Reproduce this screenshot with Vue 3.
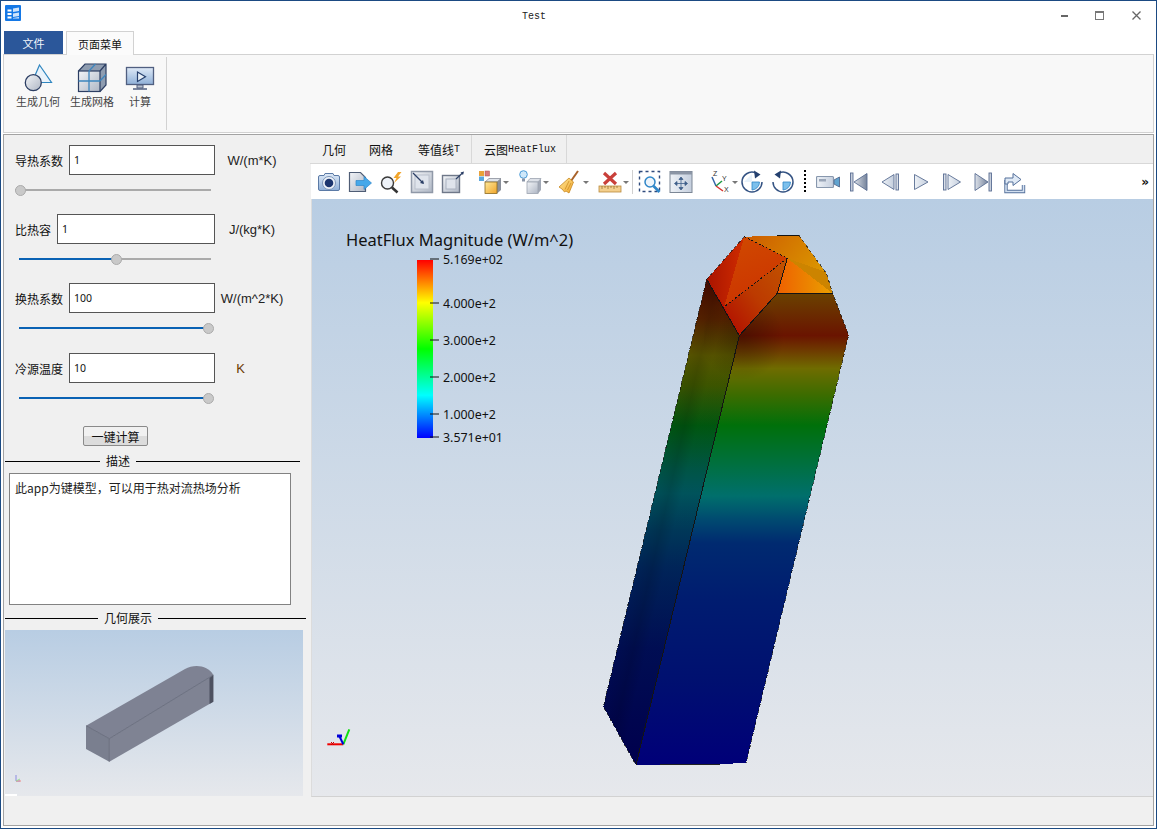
<template>
  <div class="window">
    <svg class="defs" width="0" height="0" aria-hidden="true">
      <defs>
        <linearGradient id="g-blue" x1="0" y1="0" x2="0" y2="1">
          <stop offset="0" stop-color="#dfeaf7" />
          <stop offset="1" stop-color="#8fb0d8" />
        </linearGradient>
        <linearGradient id="g-gray" x1="0" y1="0" x2="1" y2="1">
          <stop offset="0" stop-color="#f3f5f8" />
          <stop offset="1" stop-color="#aeb6c4" />
        </linearGradient>
        <linearGradient id="g-light" x1="0" y1="0" x2="1" y2="0">
          <stop offset="0" stop-color="#eef2f7" />
          <stop offset="1" stop-color="#c4cedd" />
        </linearGradient>
        <linearGradient id="g-dark" x1="0" y1="0" x2="1" y2="0">
          <stop offset="0" stop-color="#dde2ea" />
          <stop offset="1" stop-color="#75839b" />
        </linearGradient>
        <linearGradient id="g-yellow" x1="0" y1="0" x2="1" y2="1">
          <stop offset="0" stop-color="#ffe99a" />
          <stop offset="1" stop-color="#f0a52a" />
        </linearGradient>
      </defs>
    </svg>

    <header class="titlebar">
      <svg class="titlebar__logo" viewBox="0 0 16 16">
        <rect width="16" height="16" rx="1" fill="#1478e6" />
        <path d="M2.500 4.500h4v2h-4zM2.500 8h4v2h-4zM2.500 11.500h4v2h-4z" fill="#fff" />
        <path d="M8 3.500 14 2.500V6L8 7zM8 8.500 14 7.500V11L8 12zM8 13 14 12V13.500H8z" fill="#cfe4fb" />
      </svg>
      <span class="titlebar__text">Test</span>
      <div class="titlebar__controls">
        <span class="winbtn"><i class="winbtn__min"></i></span>
        <span class="winbtn"><i class="winbtn__max"></i></span>
        <span class="winbtn">
          <svg width="9" height="9" viewBox="0 0 9 9"><path d="M.5.5l8 8M8.500.5l-8 8" stroke="#666" stroke-width="1.300" /></svg>
        </span>
      </div>
    </header>

    <nav class="menu-tabs">
      <span class="menu-tab menu-tab--file">文件</span>
      <span class="menu-tab menu-tab--active">页面菜单</span>
    </nav>

    <section class="ribbon">
      <div class="ribbon__group">
        <div class="ribbon__btn">
          <svg width="32" height="32" viewBox="0 0 32 32">
            <path d="M17.500 3 29.500 20.500H10z" fill="#eaf3fb" stroke="#2f86c0" stroke-width="1.200" />
            <circle cx="11.300" cy="20.700" r="8" fill="url(#g-gray)" stroke="#2c3e63" stroke-width="1.300" />
          </svg>
          <span>生成几何</span>
        </div>
        <div class="ribbon__btn">
          <svg width="32" height="32" viewBox="0 0 32 32">
            <path d="M2.500 9 9 2h21v21l-6 6.500z" fill="#8e9cb0" />
            <rect x="2.500" y="9" width="21.500" height="20.500" fill="url(#g-gray)" stroke="#2c3e63" stroke-width="1.200" />
            <path d="M2.500 9 9 2h21v21l-6 6.500M24 9l6-7" fill="none" stroke="#2c3e63" stroke-width="1.200" />
            <path d="M13 9v20.500M2.500 19H24M13 9l6.500-7M24 19l6-6.500" fill="none" stroke="#3d85bd" stroke-width="1.300" />
          </svg>
          <span>生成网格</span>
        </div>
        <div class="ribbon__btn">
          <svg width="32" height="32" viewBox="0 0 32 32">
            <rect x="2.500" y="5.500" width="27" height="17" fill="url(#g-blue)" stroke="#505f80" stroke-width="1.300" />
            <path d="M13.500 10v9.500l8-4.800z" fill="#e8f0f8" stroke="#26406e" stroke-width="1.200" />
            <path d="M13 23h6v3h-6z" fill="#b7bfcc" stroke="#505f80" />
            <path d="M9 27h14" stroke="#505f80" stroke-width="1.500" />
          </svg>
          <span>计算</span>
        </div>
      </div>
    </section>

    <main class="main">
      <aside class="side">
        <div v-for="f in fields" :key="f.label" class="field">
          <div class="field__row">
            <div class="field__left">
              <label class="field__label">{{ f.label }}</label>
              <input class="field__input" :value="f.value" />
            </div>
            <span class="field__unit" :class="{ 'field__unit--short': f.unit === 'K' }">{{ f.unit }}</span>
          </div>
          <div class="slider" :class="{ 'slider--empty': f.pos < 5 }">
            <div class="slider__track"></div>
            <div class="slider__fill" :style="{ width: f.pos + 'px' }"></div>
            <div class="slider__handle" :style="{ left: f.pos + 'px' }"></div>
          </div>
        </div>

        <button class="calc-btn" type="button">一键计算</button>

        <div class="section-title section-title--desc">
          <i class="section-title__lead"></i><span>描述</span><i class="section-title__rest"></i>
        </div>
        <textarea class="desc" readonly :value="description"></textarea>

        <div class="section-title section-title--geo">
          <i class="section-title__lead"></i><span>几何展示</span><i class="section-title__rest"></i>
        </div>
        <div class="preview">
          <svg width="298" height="166" viewBox="5 630 298 166">
            <path d="M86 725.700 185 669C194 664 208 665 213.300 675L109.300 738.700z" fill="#7e8293" />
            <path d="M109.300 738.700 213.300 675V701.700L109.300 761.700z" fill="#7f8393" />
            <path d="M209.500 678 213.300 675V701.700L209.500 704z" fill="#4d5160" />
            <path d="M86 725.700 109.300 738.700V761.700L86 749z" fill="#7a7f8f" />
            <path d="M86 725.700 109.300 738.700 213.300 675M109.300 738.700V761.700" fill="none" stroke="#5c6070" stroke-width="0.700" />
            <path d="M16 775v6h4" fill="none" stroke="#8c8ce0" />
            <path d="M16 781h5" stroke="#e88" />
            <path d="M16 781l4-2" stroke="#9d9" />
            <rect x="5" y="794" width="12" height="2" fill="#fff" />
          </svg>
        </div>
      </aside>

      <div class="work">
        <div class="work-tabs">
          <span class="work-tab work-tab--a">几何</span>
          <span class="work-tab">网格</span>
          <span class="work-tab work-tab--c">等值线<b>T</b></span>
          <span class="work-tab work-tab--d">云图<b>HeatFlux</b></span>
        </div>

        <div class="toolbar">
          <span class="tb">
            <svg viewBox="0 0 24 24"><path d="M1.500 7Q1.500 5.500 3 5.500h4l1-2h8l1 2h4q1.500 0 1.500 1.500v12q0 1.500-1.500 1.500H3q-1.500 0-1.500-1.500z" fill="url(#g-blue)" stroke="#5b7aa6" /><circle cx="12" cy="13" r="6.500" fill="#eef3f9" stroke="#7d95b8" /><circle cx="12" cy="13" r="4.300" fill="#1c366f" /></svg>
          </span>
          <span class="tb">
            <svg viewBox="0 0 24 24"><path d="M1.500 2.500h11l5 5v14h-16z" fill="url(#g-gray)" stroke="#4f5d75" stroke-width="1.200" /><path d="M8 10.500h8V6.500l7.500 6.500-7.500 6.500v-4H8z" fill="#45a8ea" stroke="#2f86c8" stroke-width="0.700" /></svg>
          </span>
          <span class="tb">
            <svg viewBox="0 0 24 24"><circle cx="8.500" cy="13" r="6" fill="#eef2f8" stroke="#3a3a3a" stroke-width="1.400" /><path d="M13 17.500l5.500 5" stroke="#333" stroke-width="2.600" /><path d="M19 2 14.500 8h3l-2.500 5 7-6.500h-3L22.500 2z" fill="#f2a52b" /></svg>
          </span>
          <span class="tb">
            <svg viewBox="0 0 24 24"><rect x="1.500" y="1.500" width="21" height="21" fill="url(#g-gray)" stroke="#9099a8" stroke-width="1.500" /><rect x="5" y="5" width="14" height="14" fill="#dfe4ec" stroke="#b9c0cc" /><path d="M3 3 13 13" stroke="#2b3f66" stroke-width="1.300" /><path d="M14 14l-4-1 3-3z" fill="#2b3f66" /></svg>
          </span>
          <span class="tb">
            <svg viewBox="0 0 24 24"><rect x="1.500" y="5.500" width="17" height="17" fill="url(#g-gray)" stroke="#6f7889" stroke-width="1.400" /><rect x="5" y="9" width="10" height="10" fill="#dfe4ec" stroke="#aab2c0" /><path d="M15 9 22 2.500" stroke="#2b3f66" stroke-width="1.200" /><path d="M23 1.500l-1 3.500-2.500-2.500z" fill="#2b3f66" /></svg>
          </span>

          <span class="tb tb--drop tb--first-drop">
            <svg viewBox="0 0 24 24"><rect x="1" y="1" width="5" height="5" fill="#e9a23a" /><rect x="1" y="6.500" width="5" height="4.500" fill="#5ba7dd" /><rect x="7" y="1" width="4.500" height="5" fill="#d97a7a" stroke="#a55" stroke-width="0.500" /><path d="M7 12h12l4-3.500H11z" fill="#dfe3ea" stroke="#8a8f9a" stroke-width="0.800" /><path d="M19 12l4-3.500V20l-4 3.500z" fill="#8a8f9a" /><rect x="7" y="12" width="12" height="11.500" fill="url(#g-yellow)" stroke="#8c6a20" stroke-width="0.800" /></svg>
            <i class="caret"></i>
          </span>
          <span class="tb tb--drop">
            <svg viewBox="0 0 24 24"><circle cx="5.500" cy="4.500" r="3.800" fill="#cfe8fa" stroke="#4a9ad6" /><path d="M4 8.500h3v3H4z" fill="#8a94a6" /><path d="M9 12h11l3-3.500H12z" fill="#dde1e8" stroke="#9ca3b0" stroke-width="0.800" /><path d="M20 12l3-3.500V20l-3 3.500z" fill="#a2a9b6" /><rect x="9" y="12" width="11" height="11.500" fill="url(#g-gray)" stroke="#9ca3b0" stroke-width="0.800" /></svg>
            <i class="caret"></i>
          </span>
          <span class="tb tb--drop">
            <svg viewBox="0 0 24 24"><path d="M20 1 13 11" stroke="#a8622a" stroke-width="2" /><path d="M11 8 15.500 12 11 23 8 21 6.500 22 4 19 1 17z" fill="url(#g-yellow)" stroke="#c8861e" stroke-width="0.800" /><path d="M11 11 7 19.500M13 13l-3.500 7" stroke="#c8861e" stroke-width="0.700" /></svg>
            <i class="caret"></i>
          </span>
          <span class="tb tb--drop tb--ruler">
            <svg viewBox="0 0 24 24"><path d="M6 3l12 11M18 3 6 14" stroke="#c9403a" stroke-width="3.200" /><rect x="1" y="16" width="22" height="6" fill="#f3cf8d" stroke="#b98a3d" stroke-width="0.800" /><path d="M4 16v3M7 16v2M10 16v3M13 16v2M16 16v3M19 16v2" stroke="#8b642a" stroke-width="0.700" /></svg>
            <i class="caret"></i>
          </span>
          <i class="tb-sep"></i>
          <span class="tb">
            <svg viewBox="0 0 24 24"><rect x="1.500" y="1.500" width="20" height="20" fill="none" stroke="#2f4a7d" stroke-width="1.400" stroke-dasharray="3 3" /><circle cx="12" cy="12" r="5" fill="#eef5fb" stroke="#2f86c8" stroke-width="1.500" /><path d="M15.500 16l6 6" stroke="#2f86c8" stroke-width="2.600" /></svg>
          </span>
          <span class="tb">
            <svg viewBox="0 0 24 24"><rect x="1" y="1.500" width="22" height="21" fill="url(#g-light)" stroke="#7c8796" /><rect x="1" y="1.500" width="22" height="3" fill="#8b95a5" /><path d="M12 7l2 2.500h-4zM12 20l2-2.500h-4zM5.500 13.500 8 11.500v4zM18.500 13.500 16 11.500v4zM12 9.500v8M8 13.500h8" fill="#3f5f8a" stroke="#3f5f8a" stroke-width="0.800" /></svg>
          </span>
          <span class="tb tb--drop tb--axes">
            <svg viewBox="0 0 24 24">
              <path d="M8 16 4 7" stroke="#3465a8" stroke-width="1.500" /><path d="M8 16 14 11" stroke="#1e9a44" stroke-width="1.500" /><path d="M8 16l7 5" stroke="#d8332f" stroke-width="1.500" />
              <text class="axis-letter" x="5" y="6">Z</text><text class="axis-letter" x="14" y="11">Y</text><text class="axis-letter" x="16" y="22">X</text>
            </svg>
            <i class="caret"></i>
          </span>
          <span class="tb tb--rotate">
            <svg viewBox="0 0 24 24"><path d="M12 12h7.500a8 8 0 0 1-7.500 8z" fill="#7cc0ec" stroke="#2f86c8" stroke-width="0.800" /><path d="M12 4V12H4" fill="#e8f2fb" /><path d="M2 12A10 10 0 0 0 22 12" fill="none" stroke="#345383" stroke-width="1.500" /><path d="M2 12A10 10 0 0 1 16 3" fill="none" stroke="#345383" stroke-width="1.500" /><path d="M14 .5l6.500 4-5.500 4z" fill="#24406f" /></svg>
          </span>
          <span class="tb tb--rotate">
            <svg viewBox="0 0 24 24"><path d="M12 12h7.500a8 8 0 0 1-7.500 8z" fill="#7cc0ec" stroke="#2f86c8" stroke-width="0.800" /><path d="M2 12A10 10 0 0 0 22 12 10 10 0 0 0 8 3" fill="none" stroke="#345383" stroke-width="1.500" /><path d="M10 .5 3.500 4.500l5.500 4z" fill="#24406f" /></svg>
          </span>
          <i class="tb-dots"></i>
          <span class="tb">
            <svg viewBox="0 0 24 24"><rect x="0.500" y="6.500" width="17" height="11" rx="1" fill="url(#g-light)" stroke="#8797ad" stroke-width="1.200" /><rect x="3" y="9" width="7" height="2.500" fill="#9aa6b8" /><path d="M18 10l5.500-3v10L18 14z" fill="#5fa3cf" stroke="#5b7396" /></svg>
          </span>
          <span class="tb">
            <svg viewBox="0 0 24 24"><rect x="3.500" y="3" width="2.500" height="18" fill="#c6cedb" stroke="#596d92" stroke-width="0.900" /><path d="M20 3.500 7 12l13 8.500z" fill="url(#g-dark)" stroke="#596d92" stroke-width="0.900" /></svg>
          </span>
          <span class="tb">
            <svg viewBox="0 0 24 24"><path d="M16 4.500 4 12l12 7.500z" fill="url(#g-light)" stroke="#596d92" stroke-width="0.900" /><rect x="18" y="4" width="2.500" height="16" fill="#d9dfe8" stroke="#596d92" stroke-width="0.900" /></svg>
          </span>
          <span class="tb">
            <svg viewBox="0 0 24 24"><path d="M5.500 4.500 19 12 5.500 19.500z" fill="url(#g-light)" stroke="#596d92" stroke-width="0.900" /></svg>
          </span>
          <span class="tb">
            <svg viewBox="0 0 24 24"><rect x="3.500" y="4" width="2.500" height="16" fill="#d9dfe8" stroke="#596d92" stroke-width="0.900" /><path d="M8 4.500 20.500 12 8 19.500z" fill="url(#g-light)" stroke="#596d92" stroke-width="0.900" /></svg>
          </span>
          <span class="tb">
            <svg viewBox="0 0 24 24"><path d="M4 3.500 17 12 4 20.500z" fill="url(#g-dark)" stroke="#596d92" stroke-width="0.900" /><rect x="18" y="3" width="2.500" height="18" fill="#c6cedb" stroke="#596d92" stroke-width="0.900" /></svg>
          </span>
          <span class="tb">
            <svg viewBox="0 0 24 24"><path d="M4 10v11.500h17.500V15" fill="none" stroke="#55709b" stroke-width="3.400" /><path d="M4 10v11.500h17.500V15" fill="none" stroke="#d3e0f0" stroke-width="1.600" /><path d="M3 14V8h8V3.500l8 6-8 6V12H6v2z" fill="#dfe9f5" stroke="#55709b" /></svg>
          </span>
          <span class="tb-more">»</span>
        </div>

        <div class="viewport">
          <svg class="scene" width="840" height="597" viewBox="312 199 840 597">
            <defs>
              <linearGradient id="face-left" gradientUnits="userSpaceOnUse" x1="0" y1="280" x2="0" y2="765">
                <stop offset="0.010" stop-color="#4a0c00" />
                <stop offset="0.080" stop-color="#5c2400" />
                <stop offset="0.155" stop-color="#5d5a00" />
                <stop offset="0.216" stop-color="#3f5800" />
                <stop offset="0.300" stop-color="#005a10" />
                <stop offset="0.390" stop-color="#005848" />
                <stop offset="0.440" stop-color="#00565f" />
                <stop offset="0.515" stop-color="#003a5c" />
                <stop offset="0.600" stop-color="#00245c" />
                <stop offset="0.760" stop-color="#000e56" />
                <stop offset="0.990" stop-color="#000050" />
              </linearGradient>
              <linearGradient id="face-left-shade" gradientUnits="userSpaceOnUse" x1="655" y1="450" x2="690" y2="458">
                <stop offset="0" stop-color="#000" stop-opacity="0" />
                <stop offset="0.650" stop-color="#000" stop-opacity="0.160" />
                <stop offset="1" stop-color="#000" stop-opacity="0.040" />
              </linearGradient>
              <linearGradient id="face-right" gradientUnits="userSpaceOnUse" x1="0" y1="293" x2="0" y2="765">
                <stop offset="0" stop-color="#6b4200" />
                <stop offset="0.090" stop-color="#6a1400" />
                <stop offset="0.120" stop-color="#6e3800" />
                <stop offset="0.160" stop-color="#6f6c00" />
                <stop offset="0.216" stop-color="#3c6c00" />
                <stop offset="0.280" stop-color="#00700a" />
                <stop offset="0.364" stop-color="#007040" />
                <stop offset="0.430" stop-color="#006f6c" />
                <stop offset="0.480" stop-color="#004a70" />
                <stop offset="0.530" stop-color="#002a70" />
                <stop offset="0.650" stop-color="#001c70" />
                <stop offset="0.820" stop-color="#001070" />
                <stop offset="0.990" stop-color="#000078" />
              </linearGradient>
              <radialGradient id="corner-shade" gradientUnits="userSpaceOnUse" cx="742" cy="338" r="42">
                <stop offset="0" stop-color="#000" stop-opacity="0.280" />
                <stop offset="1" stop-color="#000" stop-opacity="0" />
              </radialGradient>
              <linearGradient id="top-red" x1="0" y1="0" x2="1" y2="0">
                <stop offset="0" stop-color="#a81400" />
                <stop offset="1" stop-color="#d02c00" />
              </linearGradient>
              <linearGradient id="top-mid" x1="0" y1="0" x2="0.300" y2="1">
                <stop offset="0" stop-color="#d04a00" />
                <stop offset="1" stop-color="#cc3400" />
              </linearGradient>
              <linearGradient id="top-low" x1="1" y1="0" x2="0" y2="1">
                <stop offset="0" stop-color="#c25400" />
                <stop offset="0.500" stop-color="#bc3a00" />
                <stop offset="1" stop-color="#b00800" />
              </linearGradient>
              <linearGradient id="top-back" x1="0" y1="0" x2="1" y2="0.500">
                <stop offset="0" stop-color="#cc5a00" />
                <stop offset="1" stop-color="#dc9a00" />
              </linearGradient>
              <linearGradient id="top-small" x1="0" y1="0" x2="1" y2="0">
                <stop offset="0" stop-color="#ee6000" />
                <stop offset="1" stop-color="#eaa000" />
              </linearGradient>
              <linearGradient id="legend" x1="0" y1="0" x2="0" y2="1">
                <stop offset="0" stop-color="#ff0000" />
                <stop offset="0.120" stop-color="#ff8000" />
                <stop offset="0.240" stop-color="#ffff00" />
                <stop offset="0.500" stop-color="#00ff00" />
                <stop offset="0.760" stop-color="#00ffff" />
                <stop offset="1" stop-color="#0000ff" />
              </linearGradient>
            </defs>

            <text class="legend-title" x="346" y="246">HeatFlux Magnitude (W/m^2)</text>
            <rect x="417" y="260" width="16" height="178" fill="url(#legend)" />
            <g v-for="t in ticks" :key="t.label">
              <line x1="430" x2="439" :y1="t.y" :y2="t.y" stroke="#111" stroke-width="1" />
              <text class="legend-label" x="443" :y="t.y + 4.500">{{ t.label }}</text>
            </g>

            <g shape-rendering="crispEdges">
              <polygon points="706.700,279.300 739.300,335.700 636,765 603.300,706.700" fill="url(#face-left)" />
              <polygon points="706.700,279.300 739.300,335.700 636,765 603.300,706.700" fill="url(#face-left-shade)" />
              <polygon points="739.300,335.700 777.300,293.300 832.700,293.300 848.700,335 746,763.300 636,765" fill="url(#face-right)" />
              <polygon points="744.300,236.700 706.700,279.300 724.300,306.700" fill="url(#top-red)" />
              <polygon points="744.300,236.700 787.300,258.300 724.300,306.700" fill="url(#top-mid)" />
              <polygon points="787.300,258.300 777.300,293.300 739.300,335.700 724.300,306.700" fill="url(#top-low)" />
              <polygon points="706.700,279.300 724.300,306.700 739.300,335.700" fill="#b80c00" />
              <polygon points="744.300,236.700 799,235.300 826.700,274 832.700,293.300 787.300,258.300" fill="url(#top-back)" />
              <polygon points="787.300,258.300 826,272 832.700,293.300" fill="#cc8400" />
              <polygon points="787.300,258.300 832.700,293.300 777.300,293.300" fill="url(#top-small)" />
            </g>
            <polygon points="739.300,335.700 777.300,293.300 832.700,293.300 848.700,335 800,420 700,420 706.700,279.300" fill="url(#corner-shade)" />

            <g fill="none" stroke="#141414" stroke-width="1" shape-rendering="crispEdges">
              <path d="M706.700 279.300 739.300 335.700 636 765M739.300 335.700 777.300 293.300H832.700M777.300 293.300 787.300 258.300" />
              <path d="M777 235.500H799" />
              <path d="M660 764.500H720" stroke="#222" />
              <path d="M744.300 236.700 787.300 258.300 724.300 306.700" stroke-dasharray="2 2" />
              <path d="M744.300 236.700 706.700 279.300 603.300 706.700 636 765M799 235.300 826.700 274 832.700 293.300 848.700 335 746 763.300" stroke-dasharray="3 3" stroke-opacity="0.700" />
            </g>

            <path d="M343.300 744.300H327.300" stroke="#f00000" stroke-width="2" />
            <path d="M331 742l3 3M334 742l-3 3" stroke="#c00" />
            <path d="M343.300 744.300 349.300 729.300" stroke="#10e010" stroke-width="2" />
            <path d="M343.300 744.300 339.300 736" stroke="#0000d8" stroke-width="2" />
            <path d="M337 736h5" stroke="#0000d8" stroke-width="3" />
          </svg>
        </div>
        <div class="status"></div>
      </div>
    </main>
  </div>
</template>

<script setup>
const fields = [
  { label: '导热系数', value: '1', unit: 'W/(m*K)', pos: 1 },
  { label: '比热容', value: '1', unit: 'J/(kg*K)', pos: 97 },
  { label: '换热系数', value: '100', unit: 'W/(m^2*K)', pos: 189 },
  { label: '冷源温度', value: '10', unit: 'K', pos: 189 }
]

const ticks = [
  { label: '5.169e+02', y: 259 },
  { label: '4.000e+2', y: 303 },
  { label: '3.000e+2', y: 340 },
  { label: '2.000e+2', y: 377 },
  { label: '1.000e+2', y: 414 },
  { label: '3.571e+01', y: 437 }
]

const description = '此app为键模型，可以用于热对流热场分析'
</script>

<style>
html,
body {
  margin: 0;
  overflow: hidden;
}
</style>

<style scoped>
.window {
  width: 1157px;
  height: 829px;
  box-sizing: border-box;
  border: 1px solid #1b4a82;
  padding: 0 2px 2px;
  background: #fff;
  display: flex;
  flex-direction: column;
  font-family: "Noto Sans CJK SC", "Liberation Sans", sans-serif;
  font-size: 12px;
  color: #111;
}

.defs {
  display: block;
}

.titlebar {
  height: 30px;
  display: flex;
  align-items: center;
  flex-shrink: 0;
}

.titlebar__logo {
  width: 16px;
  height: 16px;
  margin: -6px 0 0 2px;
}

.titlebar__text {
  margin-left: 501px;
  font-family: "Liberation Mono", monospace;
  font-size: 10px;
  color: #222;
}

.titlebar__controls {
  margin-left: auto;
  display: flex;
  align-self: flex-start;
}

.winbtn {
  width: 36px;
  height: 28px;
  display: flex;
  align-items: center;
  justify-content: center;
}

.winbtn__min {
  width: 7px;
  height: 2px;
  margin-top: 2px;
  background: #666;
}

.winbtn__max {
  width: 7px;
  height: 6px;
  margin-right: 1px;
  border: 1.5px solid #777;
  border-top-width: 2px;
}

.menu-tabs {
  height: 23px;
  display: flex;
  padding-left: 1px;
  flex-shrink: 0;
  font-size: 11px;
}

.menu-tab {
  display: flex;
  align-items: center;
  justify-content: center;
}

.menu-tab--file {
  width: 59px;
  background: #2b579a;
  color: #f2f6fb;
}

.menu-tab--active {
  width: 68px;
  margin-left: 3px;
  box-sizing: border-box;
  height: 24px;
  border: 1px solid #d2d2d2;
  border-bottom: 0;
  background: #fbfbfb;
  position: relative;
  z-index: 1;
}

.ribbon {
  height: 79px;
  box-sizing: border-box;
  flex-shrink: 0;
  border: 1px solid #d2d2d2;
  background: #f8f8f8;
}

.ribbon__group {
  width: 163px;
  height: 73px;
  box-sizing: border-box;
  margin-top: 2px;
  padding: 5px 0 0 10px;
  border-right: 1px solid #d2d2d2;
  display: flex;
}

.ribbon__btn {
  width: 48px;
  display: flex;
  flex-direction: column;
  align-items: center;
  color: #444;
  font-size: 11px;
  line-height: 14px;
}

.ribbon__btn + .ribbon__btn {
  margin-left: 6px;
}

.ribbon__btn:last-child {
  margin-left: 0;
}

.main {
  flex: 1;
  min-height: 0;
  margin-top: 1px;
  border: 1px solid #a3a3a3;
  background: #f0f0f0;
  display: flex;
}

.side {
  width: 306px;
  flex-shrink: 0;
  box-sizing: border-box;
  padding-top: 10px;
}

.field {
  margin-bottom: 9px;
}

.field:nth-child(3) {
  margin-bottom: 10px;
}

.field__row {
  height: 30px;
  display: flex;
  align-items: center;
}

.field__left {
  width: 211px;
  box-sizing: border-box;
  padding-left: 11px;
  display: flex;
  align-items: center;
  gap: 6px;
}

.field__label {
  white-space: nowrap;
}

.field__input {
  flex: 1;
  min-width: 0;
  height: 30px;
  box-sizing: border-box;
  border: 1px solid #555;
  background: #fff;
  padding: 0 4px;
  font-family: "Noto Sans", sans-serif;
  font-size: 10.5px;
  color: #111;
  outline: none;
}

.field__unit {
  width: 74px;
  text-align: center;
  font-family: "Liberation Sans", sans-serif;
  font-size: 13px;
  color: #222;
  white-space: nowrap;
}

.field__unit--short {
  padding-right: 23px;
  box-sizing: border-box;
  color: #6b3a00;
}

.slider {
  height: 30px;
  width: 192px;
  margin-left: 15px;
  position: relative;
}

.slider__track {
  position: absolute;
  top: 14px;
  left: 0;
  right: 0;
  height: 2px;
  background: #aaa;
}

.slider--empty .slider__track {
  left: -4px;
}

.slider__fill {
  position: absolute;
  top: 14px;
  left: 0;
  height: 2px;
  background: #0a62b4;
}

.slider__handle {
  position: absolute;
  top: 9.500px;
  width: 11px;
  height: 11px;
  margin-left: -5.500px;
  border-radius: 50%;
  box-sizing: border-box;
  border: 1px solid #ababab;
  background: #c9c9c9;
}

.calc-btn {
  display: block;
  width: 65px;
  height: 20px;
  margin: 13px 0 0 79px;
  padding: 0;
  border: 1px solid #8a8a8a;
  border-radius: 2px;
  background: linear-gradient(#f1f1f1 50%, #dcdcdc 50%);
  font: inherit;
  color: #111;
}

.section-title {
  height: 14px;
  display: flex;
  align-items: center;
  gap: 6px;
  margin-left: 1px;
  line-height: 14px;
}

.section-title i {
  height: 1px;
  background: #000;
}

.section-title__rest {
  flex: 1;
}

.section-title--desc {
  width: 295px;
  margin-top: 8px;
}

.section-title--desc .section-title__lead {
  width: 95px;
}

.section-title--geo {
  width: 301px;
  margin-top: 6px;
}

.section-title--geo .section-title__lead {
  width: 93px;
}

.desc {
  display: block;
  width: 282px;
  height: 132px;
  box-sizing: border-box;
  margin: 5px 0 0 5px;
  padding: 5px 5px;
  border: 1px solid #828282;
  background: #fff;
  font: inherit;
  line-height: 18px;
  color: #222;
  resize: none;
  outline: none;
}

.preview {
  width: 298px;
  height: 166px;
  margin: 5px 0 0 1px;
  background: linear-gradient(#b8cde3, #e6e8ec);
}

.preview svg {
  display: block;
}

.work {
  flex: 1;
  min-width: 0;
  display: flex;
  flex-direction: column;
}

.work-tabs {
  height: 29px;
  box-sizing: border-box;
  flex-shrink: 0;
  border-bottom: 1px solid #d8d8d8;
  display: flex;
}

.work-tab {
  display: flex;
  align-items: center;
  padding: 0 12px;
  color: #111;
}

.work-tab b {
  font-family: "Liberation Mono", monospace;
  font-size: 10px;
  font-weight: 400;
}

.work-tab--a {
  padding-right: 11px;
}

.work-tab--c {
  padding: 0 11px 0 13px;
  border-right: 1px solid #d8d8d8;
}

.work-tab--d {
  padding-right: 10px;
  border-right: 1px solid #d8d8d8;
}

.toolbar {
  height: 35px;
  flex-shrink: 0;
  margin-left: 1px;
  padding-left: 2.500px;
  background: #fff;
  display: flex;
  align-items: center;
}

.tb {
  width: 31px;
  height: 35px;
  flex-shrink: 0;
  display: flex;
  align-items: center;
  justify-content: center;
}

.tb svg {
  width: 24px;
  height: 24px;
  display: block;
  flex-shrink: 0;
}

.tb--drop {
  width: 40px;
  justify-content: flex-start;
  padding-left: 4.500px;
  box-sizing: border-box;
}

.tb--first-drop {
  margin-left: 4.500px;
}

.tb--ruler {
  width: 38px;
}

.tb--axes {
  width: 33.500px;
  margin-left: 7px;
}

.caret {
  width: 0;
  height: 0;
  margin: 2px 0 0 1px;
  border-left: 3px solid transparent;
  border-right: 3px solid transparent;
  border-top: 3px solid #777;
  flex-shrink: 0;
}

.tb--axes .caret {
  margin-left: 0;
}

.tb-sep {
  width: 1px;
  height: 24px;
  margin: 0 1px;
  background: #d0d0d0;
  flex-shrink: 0;
}

.tb-dots {
  width: 2px;
  height: 24px;
  margin: 0 5.750px;
  flex-shrink: 0;
  background: repeating-linear-gradient(#000 0 2px, transparent 2px 4px);
}

.tb-more {
  margin-left: auto;
  padding-right: 4px;
  font-family: "DejaVu Sans", sans-serif;
  font-size: 12px;
  font-weight: 700;
  color: #111;
}

.axis-letter {
  font-family: "Liberation Sans", sans-serif;
  font-size: 7px;
  fill: #333;
}

.viewport {
  height: 598px;
  box-sizing: border-box;
  flex-shrink: 0;
  margin-left: 1px;
  border-left: 1px solid #dcdcdc;
  border-bottom: 1px solid #d2d2d2;
  background: linear-gradient(#b8cde3, #e6e8ec);
}

.scene {
  display: block;
}

.legend-title {
  font-family: "Noto Sans", sans-serif;
  font-size: 16.500px;
  fill: #111;
}

.legend-label {
  font-family: "Noto Sans", sans-serif;
  font-size: 12.400px;
  fill: #111;
}

.status {
  flex: 1;
}
</style>
